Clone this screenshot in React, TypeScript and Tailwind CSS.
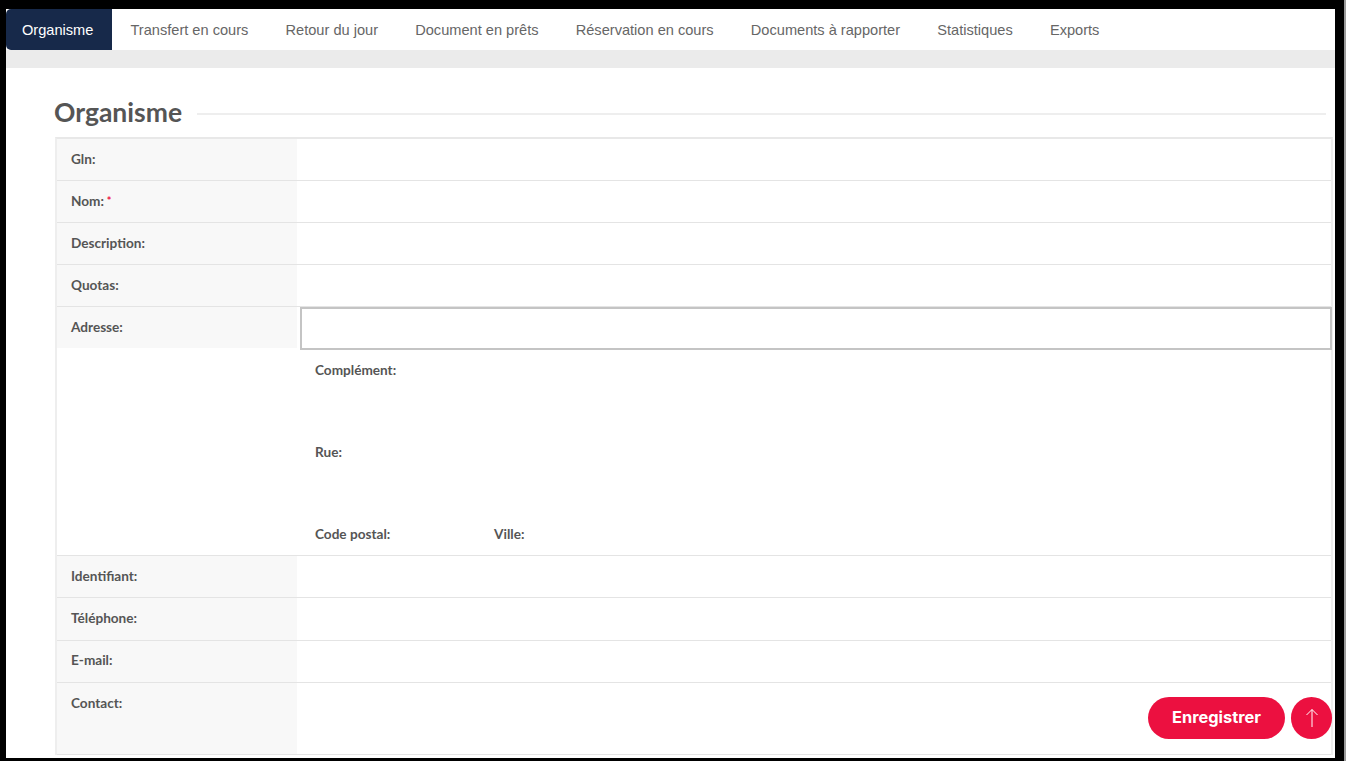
import React from "react";

const tabs = ["Transfert en cours", "Retour du jour", "Document en prêts", "Réservation en cours", "Documents à rapporter", "Statistiques", "Exports"];
const labelFont = "font-['Lato','Noto_Sans',sans-serif] font-bold text-[13.6px] text-[#555555]";

function Row({ label, req, h = "h-[42px]", pt = "pt-[11px]" }: { label: string; req?: boolean; h?: string; pt?: string }) {
  return (
    <div className={`flex border-b border-[#e4e4e4] ${h}`}>
      <div className={`w-[240px] shrink-0 bg-[#f8f8f8] pl-[14px] ${pt} leading-[18px] ${labelFont}`}>
        {label}
        {req && <span className="text-[#ee1144] text-[11px] align-top"> *</span>}
      </div>
      <div className="flex-1" />
    </div>
  );
}

export default function App() {
  return (
    <div className="relative h-[761px] w-[1346px] overflow-hidden bg-black pt-[9px] pb-[3px] pl-[6px] pr-[2px] font-['Liberation_Sans',sans-serif]">
      <div className="absolute right-0 top-0 h-full w-[2px] bg-[#9a9a9a]" />
      <div className="h-[749px] w-[1329px] overflow-hidden bg-white">
        <nav className="flex h-[41px] items-center bg-white text-[14.6px] text-[#666666]">
          <div className="flex h-full items-center rounded-l-[5px] bg-[#17294a] pl-[16px] pr-[18.5px] pt-[2px] text-white">Organisme</div>
          {tabs.map((t) => (
            <div key={t} className="flex h-full items-center px-[18.6px] pt-[2px]">{t}</div>
          ))}
        </nav>
        <div className="h-[18px] bg-[#ebebeb]" />
        <div className="pl-[48px] pr-[2px]">
          <div className="flex h-[69px] items-center pr-[7px] pt-[20px]">
            <h1 className="font-['Lato','Noto_Sans',sans-serif] text-[26.5px] font-bold leading-[30px] text-[#555555] -mt-[2px]">Organisme</h1>
            <div className="ml-[15px] mt-[2px] h-[2px] flex-1 bg-[#eeeeee]" />
          </div>
          <div className="ml-[1px] border-2 border-b-0 border-[#eeeeee] border-t-[#e8e8e8]">
            <Row label="Gln:" />
            <Row label="Nom:" req />
            <Row label="Description:" />
            <Row label="Quotas:" />
            <div className="flex h-[249px] border-b border-[#e4e4e4]">
              <div className={`h-[41px] w-[240px] shrink-0 bg-[#f8f8f8] pl-[14px] pt-[11px] leading-[18px] ${labelFont}`}>Adresse:</div>
              <div className="flex-1 pl-[3px]">
                <div className="mr-[-1px] h-[43px] border-2 border-[#c4c4c4]" />
                <div className={`pl-[15px] ${labelFont}`}>
                  <div className="flex h-[82px] pt-[11px] leading-[18px]">Complément:</div>
                  <div className="flex h-[82px] pt-[11px] leading-[18px]">Rue:</div>
                  <div className="flex pt-[11px] leading-[18px]">
                    <span className="w-[179px]">Code postal:</span>
                    <span>Ville:</span>
                  </div>
                </div>
              </div>
            </div>
            <Row label="Identifiant:" />
            <Row label="Téléphone:" h="h-[43px]" />
            <Row label="E-mail:" pt="pt-[10px]" />
            <Row label="Contact:" h="h-[72px]" />
          </div>
        </div>
      </div>
      <button className="absolute left-[1148px] top-[697px] flex h-[42px] w-[137px] items-center justify-center rounded-full bg-[#ec1040] pb-[1px] font-['Inter',sans-serif] text-[16.4px] font-bold text-white">Enregistrer</button>
      <button className="absolute left-[1291px] top-[697px] flex h-[42px] w-[41px] items-center justify-center rounded-full bg-[#ec1040]">
        <svg width="16" height="20" viewBox="0 0 16 20" fill="none" stroke="white" strokeWidth="1">
          <path d="M8 19V1.5M2.5 7L8 1.5L13.5 7" />
        </svg>
      </button>
    </div>
  );
}
